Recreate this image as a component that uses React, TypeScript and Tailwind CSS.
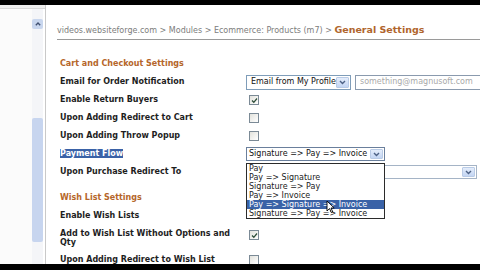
import React from "react";

const font = { fontFamily: '"DejaVu Sans", Verdana, sans-serif' };

function Chevron() {
  return (
    <svg width="7" height="5" viewBox="0 0 7 5">
      <path d="M1 1 L3.5 3.5 L6 1" fill="none" stroke="#4d6185" strokeWidth="1.4" />
    </svg>
  );
}

function ArrowBtn() {
  return (
    <div className="flex h-full w-[13px] shrink-0 items-center justify-center rounded-[1px] border border-[#b9cbe6] bg-gradient-to-b from-[#e4edfb] to-[#c3d5f3]">
      <Chevron />
    </div>
  );
}

function Checkbox({ checked }: { checked?: boolean }) {
  return (
    <div className="flex h-[10px] w-[10px] items-center justify-center border border-[#7b8a96] bg-gradient-to-br from-[#e2e2dc] to-white">
      {checked && (
        <svg width="7" height="7" viewBox="0 0 7 7">
          <path d="M1 3.5 L2.8 5.3 L6 1.5" fill="none" stroke="#2f4f3a" strokeWidth="1.3" />
        </svg>
      )}
    </div>
  );
}

function Row({ label, children, h = "h-[18px]" }: { label: React.ReactNode; children?: React.ReactNode; h?: string }) {
  return (
    <div className={`flex ${h} items-center`}>
      <div className="w-[186px] whitespace-nowrap text-[8px] font-bold text-[#1e1e1e]">{label}</div>
      <div className="flex items-center">{children}</div>
    </div>
  );
}

export default function App() {
  return (
    <div className="flex h-[270px] w-[480px] flex-col overflow-hidden bg-white" style={font}>
      <div className="h-[5px] bg-black" />
      <div className="flex flex-1 overflow-hidden">
        {/* left frame with scrollbar */}
        <div className="flex w-[46px] shrink-0 flex-col border-r border-[#c9c9c9]">
          <div className="h-[4px] border-b border-[#d8d8d8] bg-[#eeeeee]" />
          <div className="flex flex-1">
            <div className="flex-1 bg-[#fbfbfb]" />
            <div className="mr-[2px] flex w-[11px] flex-col bg-[#f4f5f8]">
              <div className="mt-[10px] flex h-[10px] items-center justify-center rounded-[2px] bg-[#c8d6ee]">
                <svg width="6" height="4" viewBox="0 0 6 4">
                  <path d="M0.8 3.3 L3 1 L5.2 3.3" fill="none" stroke="#3f4f70" strokeWidth="1.3" />
                </svg>
              </div>
              <div className="mt-[89px] h-[124px] rounded-[2px] bg-[#c7d5ef]" />
            </div>
          </div>
        </div>

        {/* main page */}
        <div className="relative flex-1 pl-[11px]">
          <div className="mt-[19px] flex h-[12px] items-center border-b border-[#9a9a9a] pb-[3px] text-[8px] text-[#7c7c7c]" style={{ boxSizing: "content-box" }}>
            <span className="whitespace-nowrap">
              videos.websiteforge.com &gt; Modules &gt; Ecommerce: Products (m7) &gt;{" "}
              <span className="text-[9.5px] font-bold text-[#b0652d]">General Settings</span>
            </span>
          </div>

          <div className="pl-[3px]">
            <div className="mt-[14px] flex h-[19px] items-center text-[8px] font-bold text-[#b5662a]">Cart and Checkout Settings</div>

            <Row label="Email for Order Notification">
              <div className="flex h-[15px] w-[105px] items-center justify-between overflow-hidden border border-[#7f9db9] bg-white py-[1px] pl-[4px] pr-[1px] text-[8px] text-[#111]">
                <span className="whitespace-nowrap">Email from My Profile</span>
                <ArrowBtn />
              </div>
              <div className="ml-[4px] flex h-[15px] w-[140px] items-center border border-[#8a9aae] pl-[4px] text-[8px] text-[#a9a9a9]">
                something@magnusoft.com
              </div>
            </Row>
            <Row label="Enable Return Buyers">
              <div className="pl-[3px]"><Checkbox checked /></div>
            </Row>
            <Row label="Upon Adding Redirect to Cart">
              <div className="pl-[3px]"><Checkbox /></div>
            </Row>
            <Row label="Upon Adding Throw Popup">
              <div className="pl-[3px]"><Checkbox /></div>
            </Row>
            <Row label={<span className="bg-[#3a62a7] text-white">Payment Flow</span>}>
              <div className="flex h-[14px] w-[139px] items-center justify-between border border-[#6a7f9c] bg-white py-[1px] pl-[2px] pr-[1px] text-[8px] text-[#111]">
                <span className="whitespace-nowrap">Signature =&gt; Pay =&gt; Invoice</span>
                <ArrowBtn />
              </div>
            </Row>
            <Row label="Upon Purchase Redirect To">
              <div className="flex h-[14px] w-[231px] items-center justify-end border border-[#a5b4c6] bg-white py-[1px] pr-[1px]">
                <ArrowBtn />
              </div>
            </Row>

            <div className="mt-[8px] flex h-[18px] items-center text-[8px] font-bold text-[#b5662a]">Wish List Settings</div>
            <Row label="Enable Wish Lists" />
            <div className="flex h-[27px] items-start pt-[4px]">
              <div className="w-[186px] text-[8px] font-bold leading-[9px] text-[#1e1e1e]">
                Add to Wish List Without Options and
                <br />
                Qty
              </div>
              <div className="mt-[1px] pl-[3px]"><Checkbox checked /></div>
            </div>
            <Row label="Upon Adding Redirect to Wish List" h="h-[15px]">
              <div className="pl-[3px]"><Checkbox /></div>
            </Row>
          </div>

          {/* open dropdown list */}
          <div className="absolute left-[200px] top-[158px] w-[139px] border border-[#2b2b2b] bg-white text-[8px] leading-[9px] text-[#222]">
            {["Pay", "Pay => Signature", "Signature => Pay", "Pay => Invoice", "Pay => Signature => Invoice", "Signature => Pay => Invoice"].map((o, i) => (
              <div key={o} className={`whitespace-nowrap pl-[2px] ${i === 4 ? "bg-[#3a62a7] text-white" : ""}`}>
                {o}
              </div>
            ))}
            <svg className="absolute left-[79px] top-[36px]" width="9" height="14" viewBox="0 0 9 14">
              <path d="M1 1 L1 11 L3.5 8.6 L5.4 12.6 L6.8 12 L5 8 L8.2 8 Z" fill="white" stroke="black" strokeWidth="0.9" />
            </svg>
          </div>
        </div>
      </div>
      <div className="h-[6px] bg-black" />
    </div>
  );
}
